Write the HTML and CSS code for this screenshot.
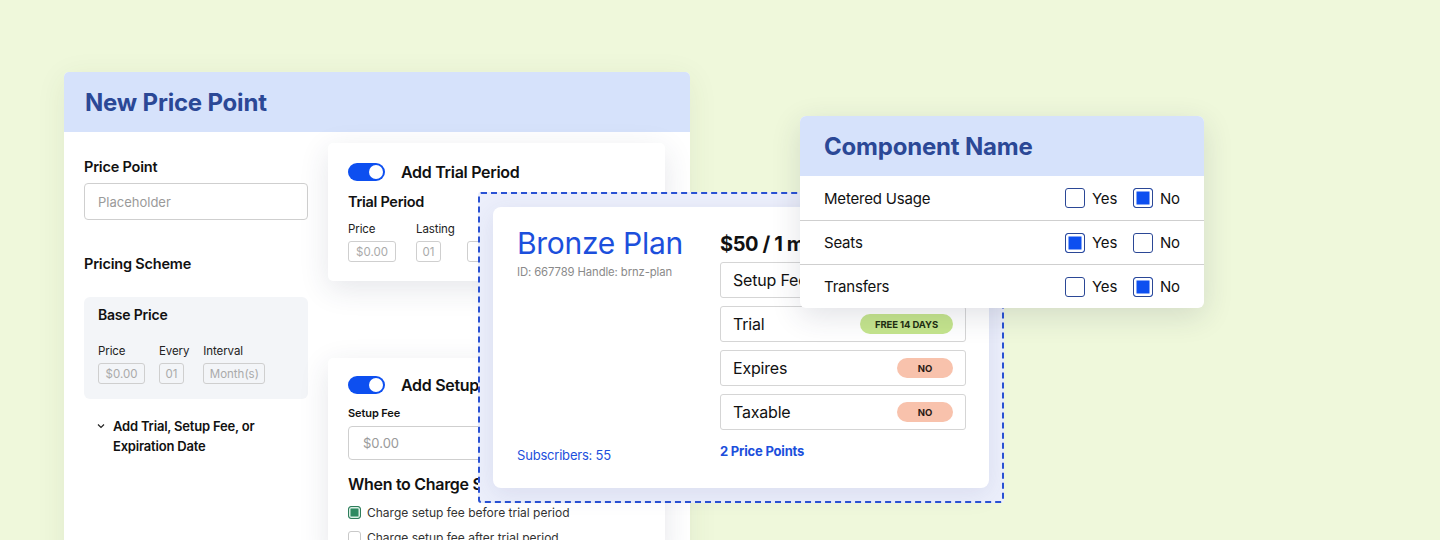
FILE: index.html
```html
<!DOCTYPE html>
<html lang="en">
<head>
<meta charset="utf-8">
<title>Price Point</title>
<link rel="stylesheet" href="styles.css">
</head>
<body>
<div class="stage">

  <section class="win main-card">
    <header class="win-head"><h1>New Price Point</h1></header>
    <div class="main-body">
      <div class="main-left">
        <div class="field-label">Price Point</div>
        <div class="input wide"><span>Placeholder</span></div>
        <div class="section-title">Pricing Scheme</div>
        <div class="base-box">
          <div class="box-title">Base Price</div>
          <div class="mini-row">
            <div class="mini-col"><span class="mini-label">Price</span><span class="mini-input w47">$0.00</span></div>
            <div class="mini-col"><span class="mini-label">Every</span><span class="mini-input w25">01</span></div>
            <div class="mini-col"><span class="mini-label">Interval</span><span class="mini-input w62">Month(s)</span></div>
          </div>
        </div>
        <div class="expander">
          <svg class="chev" width="8" height="6" viewBox="0 0 8 6"><path d="M1 1.5 L4 4.5 L7 1.5" fill="none" stroke="#222" stroke-width="1.2"/></svg>
          <span>Add Trial, Setup Fee, or<br>Expiration Date</span>
        </div>
      </div>
    </div>
  </section>

  <section class="win sub-card trial-card">
    <div class="toggle-row"><span class="toggle"><span class="knob"></span></span><span class="toggle-title">Add Trial Period</span></div>
    <div class="sub-title">Trial Period</div>
    <div class="mini-row trial-row">
      <div class="mini-col c1"><span class="mini-label">Price</span><span class="mini-input w48">$0.00</span></div>
      <div class="mini-col c2"><span class="mini-label">Lasting</span><span class="mini-input w25">01</span></div>
      <div class="mini-col"><span class="mini-label">&nbsp;</span><span class="mini-input w62">Day(s)</span></div>
    </div>
  </section>

  <section class="win sub-card setup-card">
    <div class="toggle-row"><span class="toggle"><span class="knob"></span></span><span class="toggle-title">Add Setup Fee</span></div>
    <div class="small-label">Setup Fee</div>
    <div class="input setup-input"><span>$0.00</span></div>
    <div class="charge-title">When to Charge Setup Fee</div>
    <div class="check-line"><span class="gcheck on"></span>Charge setup fee before trial period</div>
    <div class="check-line"><span class="gcheck"></span>Charge setup fee after trial period</div>
  </section>

  <section class="bronze-frame">
    <div class="bronze-card">
      <div class="bronze-left">
        <div class="plan-name">Bronze Plan</div>
        <div class="plan-meta">ID: 667789 Handle: brnz-plan</div>
        <div class="subs">Subscribers: 55</div>
      </div>
      <div class="bronze-right">
        <div class="price">$50 / 1 month</div>
        <div class="prow"><span>Setup Fee</span></div>
        <div class="prow"><span>Trial</span><span class="badge green">FREE 14 DAYS</span></div>
        <div class="prow"><span>Expires</span><span class="badge red">NO</span></div>
        <div class="prow"><span>Taxable</span><span class="badge red">NO</span></div>
        <div class="points">2 Price Points</div>
      </div>
    </div>
  </section>

  <section class="win comp-card">
    <header class="win-head comp-head"><h2>Component Name</h2></header>
    <div class="crow">
      <span class="cname">Metered Usage</span>
      <span class="opt"><span class="cb"></span>Yes</span>
      <span class="opt"><span class="cb on"></span>No</span>
    </div>
    <div class="crow">
      <span class="cname">Seats</span>
      <span class="opt"><span class="cb on"></span>Yes</span>
      <span class="opt"><span class="cb"></span>No</span>
    </div>
    <div class="crow">
      <span class="cname">Transfers</span>
      <span class="opt"><span class="cb"></span>Yes</span>
      <span class="opt"><span class="cb on"></span>No</span>
    </div>
  </section>

</div>
</body>
</html>
```

FILE: styles.css
```css
* { box-sizing: border-box; margin: 0; padding: 0; }
html, body { width: 1440px; height: 540px; overflow: hidden; }
body {
  background: #eff8db;
  font-family: Inter, "Noto Sans", sans-serif;
  color: #111;
}
.stage { position: relative; width: 1440px; height: 540px; overflow: hidden; }

.win {
  position: absolute;
  background: #fff;
  border-radius: 5px;
  overflow: hidden;
}

/* main card */
.main-card {
  left: 64px; top: 72px; width: 626px; height: 520px;
  box-shadow: 0 6px 30px rgba(60, 80, 40, 0.08);
}
.win-head {
  background: #d6e2fb;
  height: 60px;
  display: flex; align-items: center;
  padding-left: 21px;
}
.win-head h1 {
  font-size: 24px; font-weight: 700; color: #2b4896; letter-spacing: -0.2px;
}
.main-body { padding: 26px 20px 0 20px; }
.main-left { width: 224px; display: flex; flex-direction: column; }
.field-label { font-size: 14.5px; font-weight: 600; letter-spacing: -0.2px; line-height: 18px; }
.input {
  border: 1px solid #cfcfcf; border-radius: 4px;
  display: flex; align-items: center;
  color: #9a9a9a; font-size: 13px;
}
.input.wide { height: 37px; margin-top: 7px; padding-left: 13px; }
.section-title { margin-top: 35px; font-size: 14.5px; font-weight: 600; letter-spacing: -0.2px; line-height: 18px; }
.base-box {
  margin-top: 24px; background: #f3f5f8; border-radius: 6px;
  height: 102px; padding: 9px 14px 0;
}
.box-title { font-size: 14px; font-weight: 600; letter-spacing: -0.2px; line-height: 18px; }
.mini-row { display: flex; gap: 14px; margin-top: 20px; }
.mini-col { display: flex; flex-direction: column; gap: 5px; }
.mini-label { font-size: 11.5px; color: #222; line-height: 14px; letter-spacing: -0.1px; }
.mini-input {
  height: 21px; border: 1px solid #cfcfcf; border-radius: 3px;
  font-size: 11.5px; color: #aaa; display: flex; align-items: center; justify-content: center;
}
.w47 { width: 47px; } .w48 { width: 48px; } .w25 { width: 25px; } .w62 { width: 62px; }
.expander {
  display: flex; gap: 8px; margin-top: 17px; padding-left: 13px;
  font-size: 13px; font-weight: 600; line-height: 20px; letter-spacing: -0.2px;
}
.chev { margin-top: 7px; flex: none; }

/* sub cards */
.sub-card {
  left: 328px; width: 337px;
  padding: 20px 20px 0;
  box-shadow: 0 8px 30px rgba(40, 50, 80, 0.12);
}
.trial-card { top: 143px; height: 138px; }
.setup-card { top: 358px; height: 200px; padding-top: 18px; }
.toggle-row { display: flex; align-items: center; gap: 16px; height: 18px; }
.toggle {
  width: 37px; height: 18px; border-radius: 9px; background: #0d4ff0;
  display: flex; align-items: center; justify-content: flex-end; padding-right: 2px;
}
.knob { width: 14px; height: 14px; border-radius: 50%; background: #fff; }
.toggle-title { font-size: 16px; font-weight: 600; letter-spacing: -0.3px; }
.sub-title { margin-top: 12px; font-size: 14.5px; font-weight: 600; letter-spacing: -0.3px; line-height: 18px; }
.trial-row { gap: 0; margin-top: 11px; }
.c1 { width: 68px; }
.c2 { width: 51px; }
.small-label { margin-top: 12px; font-size: 11px; font-weight: 600; letter-spacing: -0.1px; line-height: 14px; }
.setup-input { margin-top: 6px; height: 34px; width: 300px; padding-left: 14px; font-size: 13px; }
.charge-title { margin-top: 14px; font-size: 16px; font-weight: 600; letter-spacing: -0.3px; line-height: 20px; white-space: nowrap; }
.check-line {
  display: flex; align-items: center; gap: 6px;
  font-size: 12px; color: #333; margin-top: 11px; height: 14px; white-space: nowrap;
}
.check-line + .check-line { margin-top: 11px; }
.gcheck {
  width: 13px; height: 13px; border-radius: 3px; border: 1.5px solid #c9c9c9; flex: none;
}
.gcheck.on { border-color: #2e7d5b; background: #2e8a62; box-shadow: inset 0 0 0 1.5px #d9efe4; }

/* bronze */
.bronze-frame {
  position: absolute; left: 478px; top: 192px; width: 526px; height: 311px;
  border: 2px dashed #2a52d4;
  border-radius: 3px;
  background: #eceffb;
  padding: 13px;
}
.bronze-card {
  background: #fff; border-radius: 8px; height: 100%;
  display: flex; padding: 0 23px 0 24px;
  box-shadow: 0 6px 24px rgba(60, 70, 140, 0.10);
}
.bronze-left { width: 203px; display: flex; flex-direction: column; padding-top: 18px; }
.plan-name { font-size: 30px; color: #1c4fdc; letter-spacing: -0.3px; line-height: 36px; }
.plan-meta { font-size: 11.3px; color: #8a8a8a; margin-top: 4px; letter-spacing: -0.1px; }
.subs { margin-top: auto; margin-bottom: 25px; font-size: 13px; color: #1c4fdc; letter-spacing: -0.2px; }
.bronze-right { flex: 1; display: flex; flex-direction: column; gap: 8px; padding-top: 25px; }
.price { font-size: 20px; font-weight: 700; letter-spacing: -0.4px; line-height: 24px; margin-bottom: -2px; white-space: nowrap; }
.prow {
  height: 36px; border: 1px solid #d5d5d5; border-radius: 3px;
  display: flex; align-items: center; justify-content: space-between;
  padding: 0 12px 0 12px; font-size: 16px; letter-spacing: -0.2px;
}
.badge {
  height: 20px; border-radius: 10px; font-size: 9.5px; font-weight: 700;
  display: flex; align-items: center; justify-content: center; letter-spacing: -0.1px;
}
.badge.green { background: #c5e58d; width: 93px; color: #1f2f10; }
.badge.red { background: #f8c2ac; width: 56px; color: #2a1a14; }
.points { margin-top: 5px; font-size: 13px; font-weight: 700; color: #1c4fdc; letter-spacing: -0.2px; }

/* component card */
.comp-card {
  left: 800px; top: 116px; width: 404px; height: 192px;
  border-radius: 6px;
  box-shadow: 0 8px 30px rgba(40, 50, 80, 0.14);
}
.comp-head { padding-left: 24px; }
.comp-head h2 { font-size: 24px; font-weight: 700; color: #2b4896; letter-spacing: -0.2px; }
.crow {
  height: 44px; display: flex; align-items: center; padding: 0 24px;
  font-size: 15px; letter-spacing: -0.2px;
}
.crow + .crow { border-top: 1px solid #cfcfcf; }
.cname { flex: 1; }
.opt { display: flex; align-items: center; gap: 7px; width: 68px; }
.opt:last-child { width: 47px; }
.cb {
  width: 20px; height: 20px; border: 1.5px solid #2b4896; border-radius: 3px; background: #fff;
}
.cb.on { background: #0d4ff0; box-shadow: inset 0 0 0 2.5px #fff; }
```
